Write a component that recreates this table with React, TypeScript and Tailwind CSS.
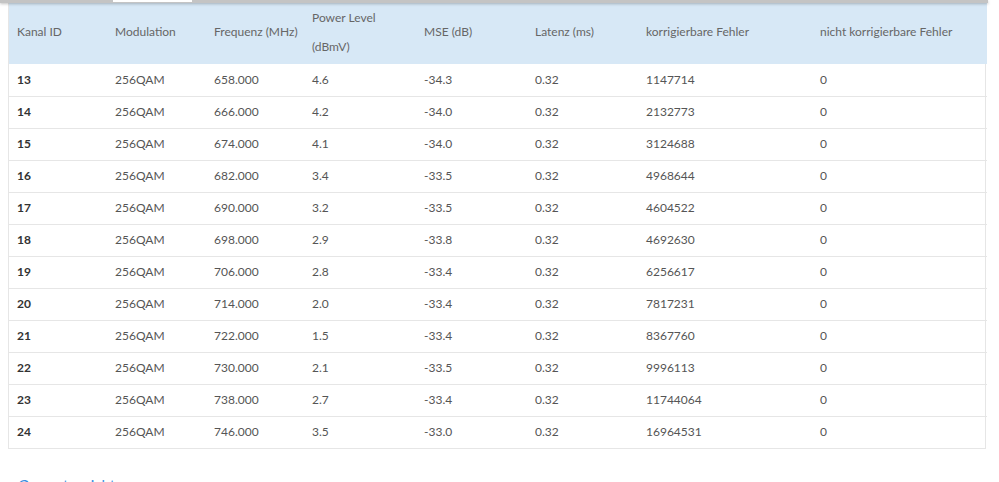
const rows = [
  ["13", "256QAM", "658.000", "4.6", "-34.3", "0.32", "1147714", "0"],
  ["14", "256QAM", "666.000", "4.2", "-34.0", "0.32", "2132773", "0"],
  ["15", "256QAM", "674.000", "4.1", "-34.0", "0.32", "3124688", "0"],
  ["16", "256QAM", "682.000", "3.4", "-33.5", "0.32", "4968644", "0"],
  ["17", "256QAM", "690.000", "3.2", "-33.5", "0.32", "4604522", "0"],
  ["18", "256QAM", "698.000", "2.9", "-33.8", "0.32", "4692630", "0"],
  ["19", "256QAM", "706.000", "2.8", "-33.4", "0.32", "6256617", "0"],
  ["20", "256QAM", "714.000", "2.0", "-33.4", "0.32", "7817231", "0"],
  ["21", "256QAM", "722.000", "1.5", "-33.4", "0.32", "8367760", "0"],
  ["22", "256QAM", "730.000", "2.1", "-33.5", "0.32", "9996113", "0"],
  ["23", "256QAM", "738.000", "2.7", "-33.4", "0.32", "11744064", "0"],
  ["24", "256QAM", "746.000", "3.5", "-33.0", "0.32", "16964531", "0"],
];

const widths = ["w-[98px]", "w-[99px]", "w-[98px]", "w-[112px]", "w-[111px]", "w-[111px]", "w-[174px]", "w-[175px]"];

export default function App() {
  return (
    <div className="relative w-[999px] h-[482px] overflow-hidden bg-white font-['Lato',sans-serif] text-[12px]">
      {/* tab strip peeking in at the top */}
      <div className="absolute left-0 top-0 w-[988px] h-[3px] bg-[#c4c4c4] shadow-[0_1px_3px_rgba(0,0,0,0.25)]">
        <div className="ml-[113px] w-[79px] h-[2px] bg-white" />
      </div>

      <div className="ml-2 w-[978px] border-x border-b border-[#e6e6e6]">
        <table className="w-full border-collapse table-fixed">
          <thead>
            <tr className="bg-[#d7e8f6] text-[#666] h-[64px]">
              {["Kanal ID", "Modulation", "Frequenz (MHz)", "", "MSE (dB)", "Latenz (ms)", "korrigierbare Fehler", "nicht korrigierbare Fehler"].map((h, i) => (
                <th key={i} className={`${widths[i]} px-2 text-left font-normal align-middle whitespace-nowrap`}>
                  {i === 3 ? (
                    <div className="leading-[29px]">
                      Power Level
                      <br />
                      (dBmV)
                    </div>
                  ) : (
                    h
                  )}
                </th>
              ))}
            </tr>
          </thead>
          <tbody>
            {rows.map((r, ri) => (
              <tr key={ri} className="h-[32px] border-t border-[#e6e6e6] first:border-t-0">
                {r.map((c, ci) => (
                  <td key={ci} className={`px-2 ${ci === 0 ? "font-bold text-[#333]" : "text-[#555]"}`}>
                    {c}
                  </td>
                ))}
              </tr>
            ))}
          </tbody>
        </table>
      </div>

      <div className="mt-[27px] ml-[10px] leading-[18px]">
        <a className="text-[#3b8ee0] text-[15px]">‹ Gesamtansicht</a>
      </div>
    </div>
  );
}
